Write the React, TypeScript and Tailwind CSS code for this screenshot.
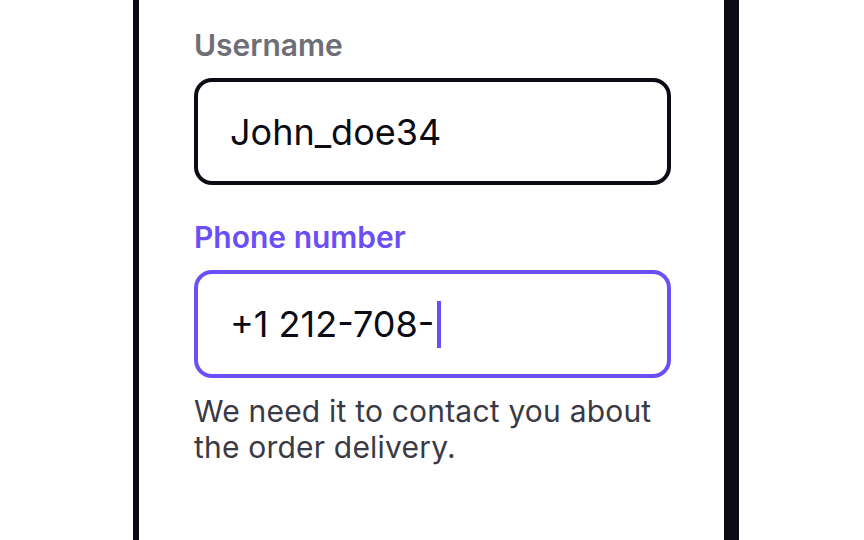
import React from 'react'

const App = () => {
  return (
    <div className="w-[864px] h-[540px] overflow-hidden bg-white" style={{ fontFamily: 'Inter, "Noto Sans", sans-serif' }}>
      <div className="ml-[133px] w-[606px] h-full border-l-[6px] border-r-[15px] border-[#0b0b14] bg-white">
        <div className="pl-[55px] pr-[53px] pt-[26px]">
          <label className="block text-[30px] leading-[38px] font-semibold text-[#6e6e78]">Username</label>
          <div className="mt-[14px] h-[107px] rounded-[18px] border-[4px] border-[#0b0b14] flex items-center pl-[32px]">
            <span className="text-[36px] text-[#0b0b14]">John_doe34</span>
          </div>
          <label className="block mt-[33px] text-[30px] leading-[38px] font-semibold text-[#6a4ff7]">Phone number</label>
          <div className="mt-[14px] h-[108px] rounded-[18px] border-[4px] border-[#6a4ff7] flex items-center pl-[32px]">
            <span className="text-[36px] text-[#0b0b14]">+1 212-708-</span>
            <span className="ml-[3px] w-[4px] h-[47px] bg-[#6a4ff7]" />
          </div>
          <p className="mt-[15px] text-[30px] leading-[36px] tracking-[0.2px] text-[#3a3a45]">
            We need it to contact you about<br />the order delivery.
          </p>
        </div>
      </div>
    </div>
  )
}

export default App
